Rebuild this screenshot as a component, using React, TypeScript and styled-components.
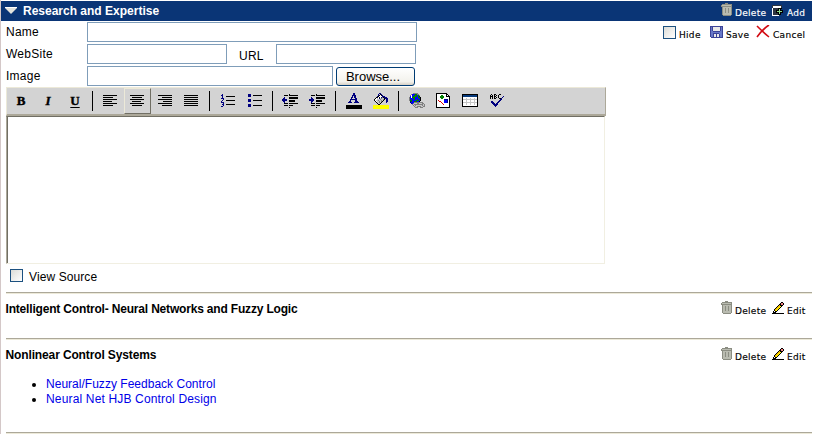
import React from 'react';
import styled, { createGlobalStyle, css } from 'styled-components';

const Global = createGlobalStyle`
  html, body { margin: 0; background: #fff; overflow: hidden; }
  body { font: 12px/15px "Liberation Sans", Arial, sans-serif; color: #000; }
  * { box-sizing: border-box; }
  svg { flex: none; }
`;

const Page = styled.main`
  width: 813px;
  height: 434px;
  border-left: 1px solid #d4c8c8;
  padding: 1px 1px 0 0;
  overflow: hidden;
`;

const Header = styled.header`
  display: flex;
  align-items: center;
  height: 20px;
  padding-left: 4px;
  background: #0a3576;
  color: #fff;
`;

const Heading = styled.h1<{ $gap?: number; $space?: number; $top?: number }>`
  margin: 0 0 0 ${p => p.$gap ?? 0}px;
  padding-top: ${p => p.$top ?? 0}px;
  font-size: 12px;
  line-height: 15px;
  font-weight: bold;
  white-space: nowrap;
  letter-spacing: ${p => p.$space ?? 0}px;
`;

const Actions = styled.div<{ $top?: number; $right?: number }>`
  display: flex;
  align-items: flex-start;
  height: 16px;
  margin: ${p => p.$top ?? 0}px ${p => p.$right ?? 0}px 0 auto;
`;

const Action = styled.span<{ $w: number; $gap: number }>`
  display: flex;
  width: ${p => p.$w}px;
  gap: ${p => p.$gap}px;
  white-space: nowrap;
  font: 9px/12px "DejaVu Sans", Verdana, sans-serif;
  letter-spacing: 0.3px;
  -webkit-text-stroke: 0.15px currentColor;
`;

const ActionText = styled.span<{ $top?: number }>`
  padding-top: ${p => p.$top ?? 4}px;
`;

const IconSlot = styled.span<{ $top: number }>`
  display: flex;
  align-self: flex-start;
  padding-top: ${p => p.$top}px;
`;

const Body = styled.div`
  display: flex;
  padding: 1px 0 0 5px;
`;

const Form = styled.form`
  width: 600px;
`;

const Field = styled.div`
  display: flex;
  height: 22px;
`;

const Label = styled.label<{ $w: number; $top?: number; $left?: number }>`
  width: ${p => p.$w}px;
  padding: ${p => p.$top ?? 3}px 0 0 ${p => p.$left ?? 0}px;
  letter-spacing: 0.25px;
`;

const Input = styled.input<{ $w: number }>`
  width: ${p => p.$w}px;
  height: 20px;
  padding: 1px 3px;
  border: 1px solid #7f9db9;
  background: #fff;
  font: inherit;
`;

const Browse = styled.button`
  width: 79px;
  height: 19px;
  margin: 1px 0 0 3px;
  padding: 0 5px 0 0;
  border: 1px solid #003c74;
  border-radius: 3px;
  background: linear-gradient(#fff, #f3f2ec 80%, #d6d0c5);
  font: 13px/17px "Liberation Sans", Arial, sans-serif;
  color: #000;
  letter-spacing: 0;
  text-align: center;
`;

const Toolbar = styled.div`
  display: flex;
  height: 29px;
  width: 600px;
  margin-top: -1px;
  background: #d3d3d3;
  border: solid;
  border-width: 1px 1px 2px 1px;
  border-color: #ece9d8 #aca899 #aca899 #ece9d8;
`;

const Tool = styled.span<{ $active?: boolean; $wide?: boolean }>`
  display: flex;
  align-items: center;
  justify-content: center;
  width: 27px;
  height: 26px;
  flex: none;
  padding: ${p => (p.$wide ? '0 0 1px 1px' : '0 1px 1px 0')};
  border: 1px solid transparent;
  ${p => p.$active && css`border-color: #ece9d8 #716f64 #716f64 #ece9d8;`}
`;

const Separator = styled.i`
  width: 1px;
  height: 20px;
  margin: 3px 4px 0;
  background: #000;
  flex: none;
`;

const Glyph = styled.span<{ $kind: 'b' | 'i' | 'u' }>`
  font: bold 13px/14px "Liberation Serif", "Times New Roman", serif;
  -webkit-text-stroke: 0.4px #000;
  ${p => p.$kind === 'i' && css`font-style: italic;`}
  ${p => p.$kind === 'u' && css`text-decoration: underline; text-underline-offset: 2px;`}
`;

const Editor = styled.div`
  width: 599px;
  height: 148px;
  border: 1px solid;
  border-color: #716f64 #f1efe2 #f1efe2 #aca899;
  box-shadow: inset 1px 0 #716f64;
`;

const Check = styled.input.attrs({ type: 'checkbox' })`
  appearance: none;
  width: 13px;
  height: 13px;
  margin: 0;
  border: 1px solid #1c5180;
  background: linear-gradient(135deg, #dcdcd7, #fff);
  flex: none;
`;

const Source = styled.label`
  display: flex;
  align-items: flex-start;
  gap: 6px;
  height: 28px;
  padding: 5px 0 0 4px;
  letter-spacing: 0.1px;
`;

const SourceText = styled.span`
  padding-top: 1px;
`;

const Topic = styled.section<{ $h: number }>`
  height: ${p => p.$h}px;
  margin-left: 5px;
  border-top: 1px solid #aca899;
  box-shadow: inset 0 1px #ece9d8;
  padding-top: 8px;
`;

const TopicHead = styled.div`
  display: flex;
  height: 16px;
  margin-left: -0.5px;
`;

const Links = styled.ul`
  margin: 14px 0 0;
  padding: 0 0 0 40px;
`;

const LinkItem = styled.li<{ $space: number }>`
  height: 15px;
  letter-spacing: ${p => p.$space}px;
`;

const Link = styled.a`
  color: #0000e8;
  text-decoration: none;
`;

const palette: Record<string, string> = {
  k: '#000000', w: '#ffffff', b: '#000080', B: '#0000ff', g: '#008000', G: '#808080',
  l: '#c6c6c6', y: '#ffff00', o: '#f5c000', r: '#e00000', p: '#f08080', t: '#8b8d82',
  s: '#b9bbb0', n: '#063a7c', v: '#6878c8', V: '#3c4498', e: '#e9e9e9', m: '#8edb8e',
  d: '#2c3440',
};

function Pixels({ rows }: { rows: string[] }) {
  const width = Math.max(...rows.map(r => r.length));
  return (
    <svg width={width} height={rows.length} shapeRendering="crispEdges">
      {rows.flatMap((row, y) =>
        [...row].map((c, x) => palette[c] ? <rect key={x + '-' + y} x={x} y={y} width="1" height="1" fill={palette[c]} /> : null)
      )}
    </svg>
  );
}

const art = {
  trash: [
    '....ttt....', '.tttttttttt', 'tssssssssst', 'ttttttttttt', '.tsssssssst', '.tsstsstsst', '.tsstsstsst',
    '.tsstsstsst', '.tsstsstsst', '.tsstsstsst', '.tsssssssst', '.tsssssssst', '..tttttttt.',
  ],
  add: [
    'dddddddddd..', 'dwwwwwwwwd..', 'dwwwwwwwwd..', 'wdddddkkkk..', 'wdddddkmk...', 'wdddkkkmkkk.',
    'wdddkmmmmmk.', 'wdddkkkmkkk.', 'wdddddkmk...', 'wdddddkkk...', 'wwwwwww.....',
  ],
  save: [
    'VVVVVVVVVVVVV', 'VvVeeeeeeeVvV', 'VvVeeeeeeeVvV', 'VvVeeeeeeeVvV', 'VvVeeeeeeeVvV', 'VvvVVVVVVVvvV',
    'VvvvvvvvvvvvV', 'VvvVVVVVVvvvV', 'VvvVeeVeeVvvV', 'VvvVeeVeeVvvV', 'VvvVeeVeeVvvV', '.VVVVVVVVVVVV',
  ],
  edit: [
    '.........kk..', '........kppk.', '.......kkppk.', '......kokkk..', '.....kooyk...', '....kooyk....',
    '...kooyk.....', '..kooyk......', '..koyk.......', '.kwkk........', '.kkk.........', 'kkkkkkkkkkkk.',
  ],
  numbered: [
    '.b............', 'bb............', '.b...kkkkkkkkk', '.b............', 'bbb...........', '..b...........', '.b...kkkkkkkkk',
    'b.............', 'bbb...........', '..b...........', '.bb..kkkkkkkkk', '..b...........', 'bb............',
  ],
  bullets: [
    'bbb...........', 'bbb..kkkkkkkkk', 'bbb...........', '..............', '..............', 'bbb...........', 'bbb..kkkkkkkkk',
    'bbb...........', '..............', '..............', 'bbb...........', 'bbb..kkkkkkkkk', 'bbb...........',
  ],
  outdent: [
    '.......k........', '..kkkk.kkkkkkkkk', '................', '..b....kkkkkkkkk', '.bb....kkkkkkkkk', 'bbbbb...........',
    'bbbbb..kkkkkk...', '.bb....kkkkkk...', '..b.............', '..kkkk.kkkkkkkkk', '................', '..kkkk.kkkk.....', '................', '.......k........',
  ],
  indent: [
    '.......k........', '..kkkk.kkkkkkkkk', '................', '..b....kkkkkkkkk', '..bb...kkkkkkkkk', 'bbbbb...........',
    'bbbbb..kkkkkk...', '..bb...kkkkkk...', '..b.............', '..kkkk.kkkkkkkkk', '................', '..kkkk.kkkk.....', '................', '.......k........',
  ],
  color: [
    '.......bb.......', '.......bb.......', '......bbbb......', '......b.bb......', '.....bb.bb......', '.....b...bb.....',
    '....bbbbbbb.....', '....b....bb.....', '...bb....bbb....', '..bbbb..bbbbb...', '................', '................',
    'kkkkkkkkkkkkkkkk', 'kkkkkkkkkkkkkkkk', 'kkkkkkkkkkkkkkkk', 'kkkkkkkkkkkkkkkk',
  ],
  fill: [
    '......bb........', '.....b.kb.......', '.....bkwkb......', '....bkwwwbbb....', '...kkwkwbGkbbb..', '..kwlwblGllkbbb.',
    '.kwwlllGllGk.bb.', '.kwllGllGlk..bb.', '..kwllGlGk...bb.', '...kllGlk....b..', '....kllk........', '.....kk.........',
    'yyyyyyyyyyyyyyyy', 'yyyyyyyyyyyyyyyy', 'yyyyyyyyyyyyyyyy', 'yyyyyyyyyyyyyyyy',
  ],
  globe: [
    '....GGGGG.......', '..GBBBggGG......', '.GwBBgggBgG.....', '.BwBggggBgb.....', 'GBwgggBBBggk....', 'GBBBggBBBBgk....',
    'GgBBBgBBgBBk....', 'GggBBBBgggBk....', '.bgBBgggBBk.....', '.bBBBGGGGGGGGG..', '..bBGlllGGlllGG.', '...GlGGGGGGGGGlG',
    '....GlGllllllGlG', '.....GllGGGGllGG', '......GGG..GGG..',
  ],
  image: [
    'kkkkkkkkkkk...', 'kwwwwwwwwwkk..', 'kwwwwggwwwkwk.', 'kwwwggggwwkkkk', 'kwwwggggwwwwwk', 'kwwwwggwwwwwwk', 'kwwwwwwwbbbbwk',
    'kwrwwwwwBBBbwk', 'kwwrrwwwBBBbwk', 'kwwwwrwwBBBbwk', 'kwwwwwrwwwwwwk', 'kwwwwwwrwwwwwk', 'kwwwwwwwwwwwwk', 'kwwwwwwwwwwwwk', 'kkkkkkkkkkkkkk',
  ],
  table: [
    'kkkkkkkkkkkkkkkk', 'knnnnnnnnnnnnnnk', 'knnnnnnnnnnnnnnk', 'kwwwwwwwwwwwwwwk', 'kwwwlwwwlwwwlwwk', 'kllllllllllllllk',
    'kwwwlwwwlwwwlwwk', 'kwwwlwwwlwwwlwwk', 'kllllllllllllllk', 'kwwwlwwwlwwwlwwk', 'kwwwlwwwlwwwlwwk', 'kwwwwwwwwwwwwwwk', 'kkkkkkkkkkkkkkkk',
  ],
  spell: [
    '.k..kk...kk...', 'k.k.k.k.k.....', 'kkk.kk..k....b', 'k.k.k.k.k...b.', 'k.k.kk...kkb..', '..........bb..',
    '.........bb...', '.bb.....bb....', '.bbb...bb.....', '..bbb.bb......', '...bbbbb......', '....bbb.......', '.....b........', '..............',
  ],
};

function Align({ kind }: { kind: 'left' | 'center' | 'right' | 'full' }) {
  const lengths = [14, 10, 14, 9, 14, 10];
  return (
    <svg width="14" height="12" shapeRendering="crispEdges">
      {lengths.map((length, i) => {
        const w = kind === 'full' ? 14 : length;
        const x = kind === 'right' ? 14 - w : kind === 'center' ? Math.floor((14 - w) / 2) : 0;
        return <rect key={i} x={x} y={i * 2} width={w} height="1" />;
      })}
    </svg>
  );
}

const Triangle = () => (
  <svg width="12" height="8"><path d="M0 1h12L6 7z" fill="#e3e3dd" /><path d="M0 .5h12" stroke="#fff" /></svg>
);

const Cross = () => (
  <svg width="14" height="13"><path d="M1 1c3 3 7 7 12 11M13 0C8 3 4 8 1 12" fill="none" stroke="#d20a12" strokeWidth="1.6" /></svg>
);

function TopicActions() {
  return (
    <Actions>
      <Action $w={51} $gap={3}><Pixels rows={art.trash} /><ActionText>Delete</ActionText></Action>
      <Action $w={40} $gap={2}><IconSlot $top={1}><Pixels rows={art.edit} /></IconSlot><ActionText>Edit</ActionText></Action>
    </Actions>
  );
}

export default function App() {
  return (
    <>
      <Global />
      <Page>
        <Header>
          <Triangle />
          <Heading $gap={6}>Research and Expertise</Heading>
          <Actions>
            <Action $w={51} $gap={3}><Pixels rows={art.trash} /><ActionText>Delete</ActionText></Action>
            <Action $w={40} $gap={3}><IconSlot $top={2}><Pixels rows={art.add} /></IconSlot><ActionText>Add</ActionText></Action>
          </Actions>
        </Header>
        <Body>
          <Form>
            <Field><Label $w={81}>Name</Label><Input $w={330} /></Field>
            <Field>
              <Label $w={81}>WebSite</Label><Input $w={140} />
              <Label $w={49} $top={5} $left={12}>URL</Label><Input $w={140} />
            </Field>
            <Field><Label $w={81}>Image</Label><Input $w={246} /><Browse type="button">Browse...</Browse></Field>
            <Toolbar>
              <Tool $wide><Glyph $kind="b">B</Glyph></Tool>
              <Tool $wide><Glyph $kind="i">I</Glyph></Tool>
              <Tool $wide><Glyph $kind="u">U</Glyph></Tool>
              <Separator />
              <Tool><Align kind="left" /></Tool>
              <Tool $active><Align kind="center" /></Tool>
              <Tool $wide><Align kind="right" /></Tool>
              <Tool><Align kind="full" /></Tool>
              <Separator />
              <Tool $wide><Pixels rows={art.numbered} /></Tool>
              <Tool $wide><Pixels rows={art.bullets} /></Tool>
              <Separator />
              <Tool><Pixels rows={art.outdent} /></Tool>
              <Tool><Pixels rows={art.indent} /></Tool>
              <Separator />
              <Tool $wide><Pixels rows={art.color} /></Tool>
              <Tool $wide><Pixels rows={art.fill} /></Tool>
              <Separator />
              <Tool $wide><Pixels rows={art.globe} /></Tool>
              <Tool><Pixels rows={art.image} /></Tool>
              <Tool><Pixels rows={art.table} /></Tool>
              <Tool><Pixels rows={art.spell} /></Tool>
            </Toolbar>
            <Editor />
            <Source><Check /><SourceText>View Source</SourceText></Source>
          </Form>
          <Actions $right={1}>
            <Action $w={47} $gap={3}><IconSlot $top={4}><Check /></IconSlot><ActionText $top={7}>Hide</ActionText></Action>
            <Action $w={46} $gap={3}><IconSlot $top={4}><Pixels rows={art.save} /></IconSlot><ActionText $top={7}>Save</ActionText></Action>
            <Action $w={55} $gap={3}><IconSlot $top={3}><Cross /></IconSlot><ActionText $top={7}>Cancel</ActionText></Action>
          </Actions>
        </Body>
        <Topic $h={46}>
          <TopicHead><Heading $top={1} $space={-0.18}>Intelligent Control- Neural Networks and Fuzzy Logic</Heading><TopicActions /></TopicHead>
        </Topic>
        <Topic $h={94}>
          <TopicHead><Heading $top={1} $space={-0.13}>Nonlinear Control Systems</Heading><TopicActions /></TopicHead>
          <Links>
            <LinkItem $space={0.02}><Link>Neural/Fuzzy Feedback Control</Link></LinkItem>
            <LinkItem $space={0.16}><Link>Neural Net HJB Control Design</Link></LinkItem>
          </Links>
        </Topic>
        <Topic $h={10} />
      </Page>
    </>
  );
}
